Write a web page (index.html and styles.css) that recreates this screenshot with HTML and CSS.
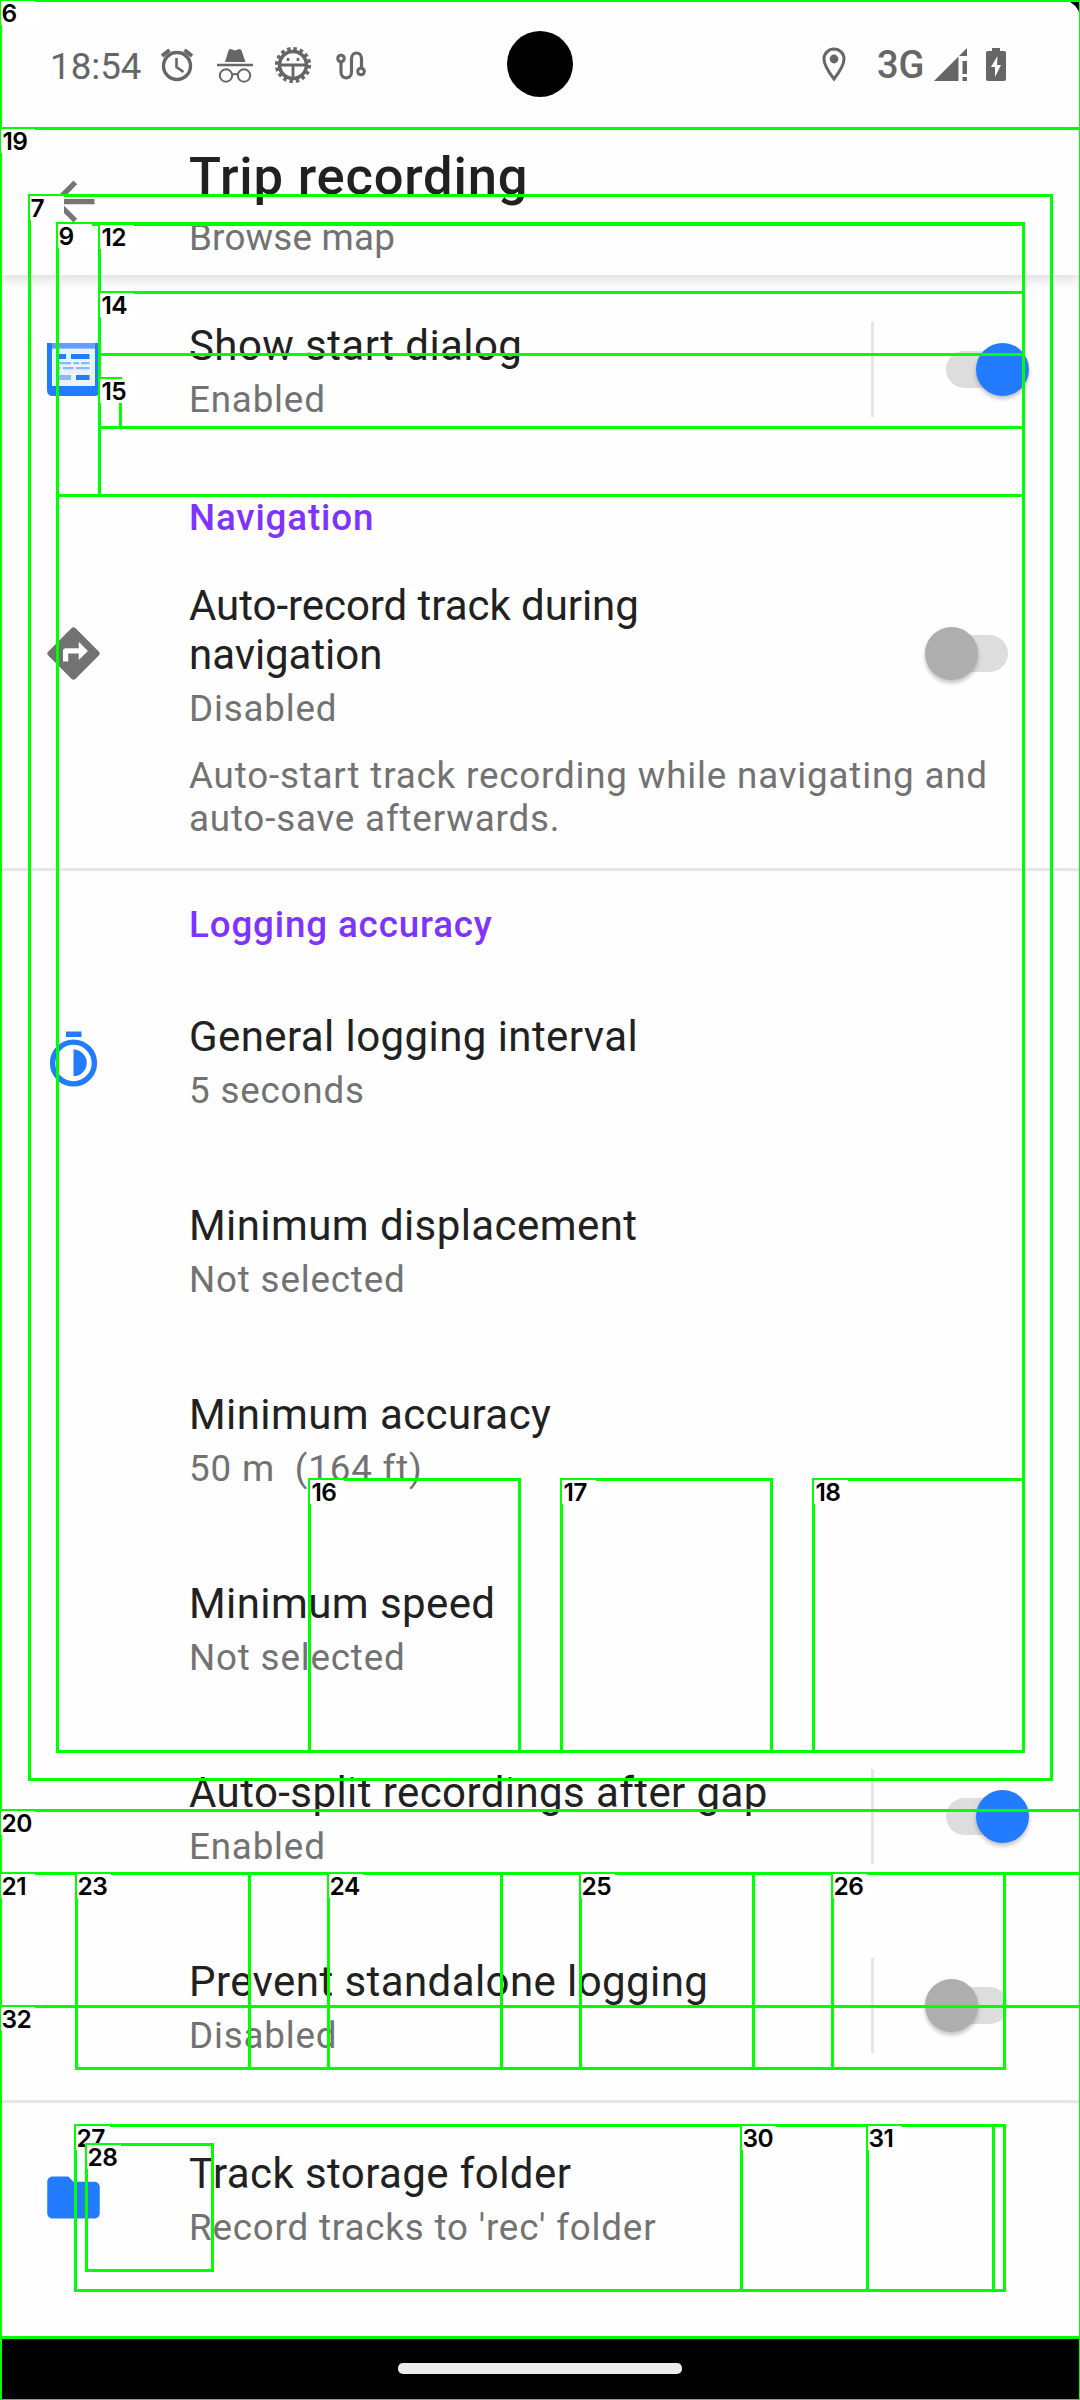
FILE: index.html
```html
<!DOCTYPE html>
<html lang="en">
<head>
<meta charset="utf-8">
<title>Trip recording</title>
<link rel="stylesheet" href="styles.css">
</head>
<body>
<div class="screen">
  <header class="status">
    <span class="clock">18:54</span>
    <svg class="status-left" width="220" height="44" viewBox="155 42 220 44" fill="none" stroke="#666">
      <circle cx="177" cy="66" r="13.500" stroke-width="3.400"/>
      <path d="M176.500 58v9l7 5" stroke-width="2.600"/>
      <path d="M162 56l7.500-6M192 56l-7.500-6" stroke-width="4"/>
      <path d="M225 62l3.500-11.500q.5-1.500 2-1.500l4.500 1.500 4.500-1.500q1.500 0 2 1.500L245.500 62z" fill="#666" stroke="none"/>
      <path d="M217 65h36" stroke-width="2.600"/>
      <circle cx="226" cy="75.500" r="6.200" stroke-width="2"/><circle cx="244" cy="75.500" r="6.200" stroke-width="2"/>
      <path d="M232 75q3-2 6 0" stroke-width="2"/>
      <circle cx="293" cy="65" r="13.500" stroke-width="3.600"/>
      <circle cx="293" cy="65" r="16.200" stroke-width="3.800" stroke-dasharray="3.400 2.960"/>
      <path d="M280 65h26M293 65v15" stroke-width="2.800"/>
      <path d="M288 58v3M298 58v3" stroke-width="2.600"/>
      <circle cx="341" cy="58.500" r="3.300" stroke-width="3"/><circle cx="361" cy="71.500" r="3.300" stroke-width="3"/>
      <path d="M341 62v10c0 8 10.500 8 10.500 0V59c0-8 10-8 10 0v9" stroke-width="3.200"/>
    </svg>
    <span class="camera"></span>
    <svg class="pin" width="24" height="35" viewBox="0 0 24 35"><path d="M12 2a10 10 0 0 0-10 10c0 7 10 20 10 20s10-13 10-20A10 10 0 0 0 12 2z" fill="none" stroke="#666" stroke-width="3"/><circle cx="12" cy="12" r="4.400" fill="#666"/></svg>
    <span class="network">3G</span>
    <svg class="signal" width="33" height="33" viewBox="0 0 33 33" fill="#666"><path d="M0 33L24.500 8.500V33zM25 8l8-8v8zM28.500 13H33v13h-4.500zM28.500 29H33v4h-4.500z"/></svg>
    <svg class="battery" width="20" height="33" viewBox="0 0 20 33"><path d="M6 0h8v3h4q2 0 2 2v26q0 2-2 2H2q-2 0-2-2V5q0-2 2-2h4z" fill="#666"/><path d="M11.500 8L5 19h4v10l6-12h-4z" fill="#fff"/></svg>
    <svg class="corner" width="14" height="15" viewBox="0 0 14 15"><path d="M0 0h14v15Q11 4 0 0z"/></svg>
  </header>

  <div class="toolbar">
    <svg class="icon" viewBox="0 0 24 24"><path fill="#757575" d="M20 11H7.830l5.590-5.590L12 4l-8 8 8 8 1.410-1.410L7.830 13H20v-2z"/></svg>
    <div class="heading">
      <h1>Trip recording</h1>
      <p class="sub">Browse map</p>
    </div>
  </div>

  <main class="list">
    <div class="row">
      <svg class="icon" viewBox="42 338 63 63">
        <path fill="#237bff" d="M47 343h53v47q0 6-6 6H53q-6 0-6-6z"/><path fill="#649fff" d="M52 343h43v5.500H52z"/>
        <path fill="#e9f2ff" d="M52 348.500h43V386H52z"/>
        <path fill="#237bff" d="M57 354h9v5h-9zM71 354h18.500v5H71zM76 375h13.500v5H76z"/>
        <path fill="#8bb8ff" d="M57 362h14v2.200H57zM73.500 362H79v2.200h-5.500zM81 362h8.500v2.200H81zM57 367h3.500v2.300H57zM63 367h10.500v2.300H63zM76 367h13.500v2.300H76zM57 375h14v5H57z"/>
      </svg>
      <div class="text"><p class="title">Show start dialog</p><p class="sub">Enabled</p></div>
      <span class="sep"></span><span class="switch on"></span>
    </div>

    <h2>Navigation</h2>
    <div class="row">
      <svg class="icon" viewBox="0 0 24 24"><path fill="#727272" d="M21.710 11.290l-9-9c-.39-.39-1.020-.39-1.410 0l-9 9c-.39.39-.39 1.020 0 1.410l9 9c.39.39 1.020.39 1.410 0l9-9c.39-.38.39-1.010 0-1.410zM14 14.500V12h-4v3H8v-4c0-.55.45-1 1-1h5V7.500l3.500 3.500-3.500 3.500z"/></svg>
      <div class="text"><p class="title tight">Auto-record track during<br>navigation</p><p class="sub">Disabled</p></div>
      <span class="switch"></span>
    </div>
    <p class="sub note">Auto-start track recording while navigating and<br>auto-save afterwards.</p>
    <hr>

    <h2>Logging accuracy</h2>
    <div class="row">
      <svg class="icon" viewBox="0 0 63 63"><path fill="#237bff" d="M24 2.500h15.500V8H24zM31.500 20.500a13.300 13.300 0 0 1 0 26.600z"/><circle cx="31.500" cy="34" r="20.900" fill="none" stroke="#237bff" stroke-width="5.400"/></svg>
      <div class="text"><p class="title">General logging interval</p><p class="sub">5 seconds</p></div>
    </div>
    <div class="row"><span class="icon"></span><div class="text"><p class="title">Minimum displacement</p><p class="sub">Not selected</p></div></div>
    <div class="row"><span class="icon"></span><div class="text"><p class="title">Minimum accuracy</p><p class="sub">50 m&nbsp; (164 ft)</p></div></div>
    <div class="row"><span class="icon"></span><div class="text"><p class="title">Minimum speed</p><p class="sub">Not selected</p></div></div>
    <div class="row"><span class="icon"></span><div class="text"><p class="title">Auto-split recordings after gap</p><p class="sub">Enabled</p></div><span class="sep"></span><span class="switch on"></span></div>
    <div class="row"><span class="icon"></span><div class="text"><p class="title">Prevent standalone logging</p><p class="sub">Disabled</p></div><span class="sep"></span><span class="switch"></span></div>
    <hr>
    <div class="row">
      <svg class="icon" viewBox="0 0 24 24"><path fill="#237bff" d="M10 4H4c-1.100 0-1.990.9-1.990 2L2 18c0 1.100.9 2 2 2h16c1.100 0 2-.9 2-2V8c0-1.100-.9-2-2-2h-8l-2-2z"/></svg>
      <div class="text"><p class="title">Track storage folder</p><p class="sub">Record tracks to 'rec' folder</p></div>
    </div>
  </main>

  <footer class="navbar"><span class="pill"></span></footer>

  <!-- Numbered element bounds drawn over the screen -->
  <svg class="bounds" width="1080" height="2400" viewBox="-.5 -.5 1080 2400">
    <path d="M0 0H1080V2400H0zM0 128H1080M0 2337H1080"/>
    <g><rect x="1" y="1" width="34" height="24"/><text x="1" y="21.500">6</text></g>
    <path d="M29 195H1051V1779H29z"/>
    <g><rect x="30" y="196" width="34" height="24"/><text x="30" y="216.500">7</text></g>
    <path d="M57 224H1023V495H57zM57 223H1023V1751H57z"/>
    <g><rect x="58" y="224" width="34" height="24"/><text x="58" y="244.500">9</text></g>
    <path d="M99 224H1023V495H99z"/>
    <g><rect x="100" y="225" width="34" height="24"/><text x="101" y="245.500">12</text></g>
    <path d="M99 292H1023V427H99zM99 354H1023"/>
    <g><rect x="100" y="293" width="34" height="24"/><text x="101" y="313.500">14</text></g>
    <path d="M99 378H120V427H99z"/>
    <g><rect x="100" y="379" width="34" height="24"/><text x="101" y="399.500">15</text></g>
    <path d="M309 1479H519V1751H309zM561 1479H771V1751H561zM813 1479H1023V1751H813z"/>
    <g><rect x="310" y="1480" width="34" height="24"/><text x="311" y="1500.500">16</text></g>
    <g><rect x="562" y="1480" width="34" height="24"/><text x="563" y="1500.500">17</text></g>
    <g><rect x="814" y="1480" width="34" height="24"/><text x="815" y="1500.500">18</text></g>
    <g><rect x="1" y="129" width="34" height="24"/><text x="2" y="149.500">19</text></g>
    <path d="M0 1810H1080M0 1873H1080M0 2006H1080"/>
    <g><rect x="1" y="1811" width="34" height="24"/><text x="1" y="1831.500">20</text></g>
    <g><rect x="1" y="1874" width="34" height="24"/><text x="1" y="1894.500">21</text></g>
    <path d="M76 1873H1004V2068H76zM249 1873V2068M328 1873V2068M501 1873V2068M580 1873V2068M753 1873V2068M832 1873V2068"/>
    <g><rect x="77" y="1874" width="34" height="24"/><text x="77" y="1894.500">23</text></g>
    <g><rect x="329" y="1874" width="34" height="24"/><text x="329" y="1894.500">24</text></g>
    <g><rect x="581" y="1874" width="34" height="24"/><text x="581" y="1894.500">25</text></g>
    <g><rect x="833" y="1874" width="34" height="24"/><text x="833" y="1894.500">26</text></g>
    <path d="M75 2125H1004V2290H75z"/>
    <g><rect x="76" y="2126" width="34" height="24"/><text x="76" y="2146.500">27</text></g>
    <path d="M86 2144H212V2270H86z"/>
    <g><rect x="87" y="2145" width="34" height="24"/><text x="87" y="2165.500">28</text></g>
    <path d="M741 2125V2290M867 2125V2290M993 2125V2290"/>
    <g><rect x="742" y="2126" width="34" height="24"/><text x="742" y="2146.500">30</text></g>
    <g><rect x="868" y="2126" width="34" height="24"/><text x="868" y="2146.500">31</text></g>
    <g><rect x="1" y="2007" width="34" height="24"/><text x="1" y="2027.500">32</text></g>
  </svg>
</div>
</body>
</html>
```
FILE: styles.css
```css
* { box-sizing: border-box; }
body { margin: 0; background: #fff; font-family: Roboto, "Liberation Sans", sans-serif; }
h1, h2, p, hr { margin: 0; font-weight: 400; }

.screen { position: relative; width: 1080px; height: 2400px; overflow: hidden; display: flex; flex-direction: column; background: #fefefe; }

.status { position: relative; height: 128px; display: flex; align-items: center; padding: 0 74px 0 50px; color: #666; flex: none; }
.clock { width: 105px; font-size: 36.750px; line-height: 43px; padding-top: 4px; }
.camera { position: absolute; left: 507px; top: 31px; width: 66px; height: 66px; border-radius: 50%; background: #000; }
.pin { margin-left: auto; }
.network { margin-left: 31px; width: 57px; font-size: 38px; font-weight: 500; line-height: 44px; padding-top: 1px; }
.battery { margin-left: 19px; }
.corner { position: absolute; right: 0; top: 0; }

.toolbar { position: relative; z-index: 1; height: 147px; flex: none; display: flex; align-items: center; padding-left: 42px; background: #fefefe; box-shadow: 0 4px 12px rgba(0,0,0,.14); }
.icon { width: 63px; height: 63px; flex: none; display: block; }
.heading { margin-left: 84px; }
.heading h1 { font-size: 52.500px; line-height: 62px; font-weight: 500; color: #212121; letter-spacing: .8px; }
.heading .sub { margin-top: 9px; letter-spacing: .2px; }

.list { flex: 1; }
.row { height: 189px; display: flex; align-items: center; padding: 0 72px 0 42px; }
.text { margin-left: 84px; flex: 1; padding-top: 3px; }
.title { font-size: 42px; line-height: 49px; color: #212121; letter-spacing: .42px; white-space: nowrap; }
.title.tight { letter-spacing: -.05px; }
.sub { font-size: 36.750px; line-height: 43px; color: #727272; letter-spacing: .82px; white-space: nowrap; }
.text .sub { margin-top: 8px; }
.note { height: 120px; padding: 6px 0 0 189px; }
h2 { height: 95px; padding: 32px 0 0 189px; font-size: 36.750px; line-height: 43px; font-weight: 500; color: #7e33ff; letter-spacing: .85px; }
hr { height: 3px; border: 0; background: #e6e6e6; }
.sep { width: 3px; height: 95px; background: #e6e6e6; }

.switch { position: relative; width: 62px; height: 37px; margin-left: 72px; border-radius: 19px; background: #ddd; }
.switch::after { content: ""; position: absolute; left: -21px; top: -8px; width: 53px; height: 53px; border-radius: 50%; background: #aeaeae; box-shadow: 0 3px 4px rgba(0,0,0,.24); }
.switch.on::after { left: 30px; background: #237bff; }

.navbar { height: 62px; flex: none; background: #000; display: flex; justify-content: center; padding-top: 25px; }
.pill { width: 284px; height: 11px; border-radius: 5px; background: #ececec; }

.bounds { position: absolute; left: 0; top: 0; z-index: 2; }
.bounds path { fill: none; stroke: #0f0; stroke-width: 3; shape-rendering: crispEdges; }
.bounds rect { fill: #fff; shape-rendering: crispEdges; transform: translate(-.5px, -.5px); }
.bounds text { font: 600 24.500px Inter, sans-serif; letter-spacing: -.5px; fill: #000; }
```
